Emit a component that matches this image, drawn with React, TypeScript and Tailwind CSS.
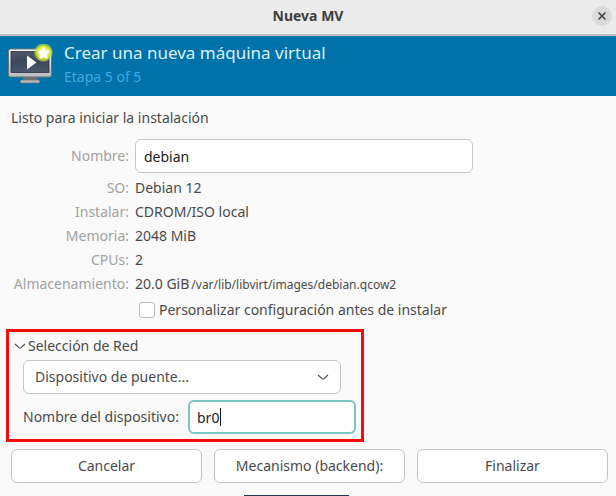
import { useState } from 'react'

const details = [
  { label: 'SO:', value: 'Debian 12' },
  { label: 'Instalar:', value: 'CDROM/ISO local' },
  { label: 'Memoria:', value: '2048 MiB' },
  { label: 'CPUs:', value: '2' },
  { label: 'Almacenamiento:', value: '20.0 GiB', path: '/var/lib/libvirt/images/debian.qcow2' },
]

function Chevron() {
  return (
    <svg viewBox="0 0 12 12" className="w-3 h-3 shrink-0" fill="none" stroke="#4a4a4a" strokeWidth="1.1" aria-hidden="true">
      <path d="M1 4L5 7.600Q6 8.400 7 7.600L11 4" />
    </svg>
  )
}

function MonitorIcon() {
  return (
    <svg viewBox="0 1 46 44" className="w-[46px] h-11 shrink-0" aria-hidden="true">
      <defs>
        <linearGradient id="frame" x1="0" y1="0" x2="0" y2="1">
          <stop offset="0" stopColor="#fafafa" />
          <stop offset="1" stopColor="#b9bbbd" />
        </linearGradient>
        <linearGradient id="screen" x1="0" y1="0" x2="0" y2="1">
          <stop offset="0" stopColor="#4d5868" />
          <stop offset="0.5" stopColor="#3c475a" />
          <stop offset="1" stopColor="#4b596d" />
        </linearGradient>
        <radialGradient id="glow">
          <stop offset="0" stopColor="#fbff90" />
          <stop offset="0.55" stopColor="#e6f23a" />
          <stop offset="0.8" stopColor="#c2dc38" stopOpacity="0.75" />
          <stop offset="1" stopColor="#a0c850" stopOpacity="0" />
        </radialGradient>
      </defs>
      <path d="M16 34h14v4H16z" fill="#6b6f73" />
      <rect x="13.500" y="37" width="19" height="3" rx="1" fill="#b4b4b4" stroke="#777" strokeWidth="0.6" />
      <rect x="1.500" y="6" width="43" height="28" rx="2" fill="url(#frame)" stroke="#6e7376" />
      <rect x="4" y="8.500" width="38" height="21" fill="url(#screen)" stroke="#29313d" strokeWidth="0.8" />
      <path d="M20 12.500L29.500 19.500L20 26.500z" fill="#fff" />
      <circle cx="36.500" cy="9.500" r="10" fill="url(#glow)" />
      <path
        d="M36.500 4L38.400 7.900L42.300 8.500L39.400 11.300L40.100 15.300L36.500 13.400L32.900 15.300L33.600 11.300L30.700 8.500L34.600 7.900z"
        fill="#fff"
        stroke="#fff"
        strokeLinejoin="round"
      />
    </svg>
  )
}

export default function App() {
  const [name, setName] = useState('debian')
  const [customize, setCustomize] = useState(false)
  const [open, setOpen] = useState(true)
  const [device, setDevice] = useState('br0')

  return (
    <div className="bg-[#fafafa] text-[#4a4a4a] text-sm leading-6 font-['Noto_Sans',sans-serif]">
      <header className="flex items-center h-9 px-1 pb-[2px] bg-[#ebebeb] border-b-2 border-[#b9c0c3]">
        <h1 className="flex-1 pl-5 text-center font-bold text-[#3d3d3d]">Nueva MV</h1>
        <button aria-label="Cerrar" className="flex items-center justify-center w-5 h-5 rounded-full bg-[#dadada]">
          <svg viewBox="0 0 8 8" className="w-2 h-2" stroke="#3d3d3d" strokeWidth="1.5" aria-hidden="true">
            <path d="M0.500 0.500L7.500 7.500M7.500 0.500L0.500 7.500" />
          </svg>
        </button>
      </header>

      <div className="flex items-center gap-[11px] h-[60px] px-[7px] bg-[#0072aa]">
        <MonitorIcon />
        <div className="pb-[2px]">
          <h2 className="text-[17px] leading-6 text-[#d9f1f8]">Crear una nueva máquina virtual</h2>
          <p className="text-[#3fabde]">Etapa 5 of 5</p>
        </div>
      </div>

      <main className="pt-[10px]">
        <p className="px-[11px]">Listo para iniciar la instalación</p>

        <div className="grid grid-cols-[118px_1fr] gap-x-[6px] px-[11px] mt-[9px]">
          <label htmlFor="name" className="self-center text-right text-[#a2a2a2]">Nombre:</label>
          <input
            id="name"
            value={name}
            onChange={(e) => setName(e.target.value)}
            className="w-full max-w-[338px] h-[34px] px-2 bg-white border border-[#c4c4c4] rounded-md text-[#222] outline-none"
          />
          <dl className="col-span-2 grid grid-cols-subgrid pt-[3px]">
            {details.map((d) => (
              <div key={d.label} className="col-span-2 grid grid-cols-subgrid">
                <dt className="text-right text-[#a2a2a2]">{d.label}</dt>
                <dd className="whitespace-nowrap">
                  {d.value}
                  {d.path && <span className="ml-[2px] text-xs">{d.path}</span>}
                </dd>
              </div>
            ))}
          </dl>
          <label className="col-start-2 flex items-center gap-1 pl-1 mt-[2px]">
            <input
              type="checkbox"
              checked={customize}
              onChange={(e) => setCustomize(e.target.checked)}
              className="appearance-none w-4 h-4 bg-white border border-[#bdbdbd] rounded-[3px] checked:bg-[#0072aa]"
            />
            Personalizar configuración antes de instalar
          </label>
        </div>

        <section className="w-[358px] max-w-full ml-[6px] mt-[7px] px-[5px] pb-[5px] border-[3px] border-[#f20d0d]">
          <button
            aria-expanded={open}
            onClick={() => setOpen(!open)}
            className="flex items-center gap-[2px] h-7"
          >
            <Chevron />
            Selección de Red
          </button>
          {open && (
            <div className="flex flex-col gap-[6px] pl-[9px]">
              <div className="relative w-[318px] max-w-full">
                <select
                  aria-label="Selección de Red"
                  className="appearance-none w-full h-[34px] px-[11px] bg-white border border-[#c4c4c4] rounded-md"
                >
                  <option>Dispositivo de puente...</option>
                </select>
                <span className="absolute right-3 top-[11px] pointer-events-none">
                  <Chevron />
                </span>
              </div>
              <div className="flex items-center">
                <label htmlFor="device" className="w-[165px] whitespace-nowrap">Nombre del dispositivo:</label>
                <div className="relative flex-1">
                  <input
                    id="device"
                    value={device}
                    onChange={(e) => setDevice(e.target.value)}
                    className="w-full h-[34px] px-[7px] bg-white border-2 border-[#7cc5c0] rounded-md text-[#222] outline-none caret-transparent"
                  />
                  {/* text cursor, sits right after the typed value */}
                  <span className="absolute left-[9px] top-2 flex h-[18px] pr-px border-r border-[#111] pointer-events-none">
                    <span className="invisible" aria-hidden="true">{device}</span>
                  </span>
                </div>
              </div>
            </div>
          )}
        </section>

        <div className="grid grid-cols-3 gap-3 pl-[11px] pr-2 mt-[7px]">
          <button className="h-[34px] bg-white border border-[#c4c4c4] rounded-md">Cancelar</button>
          <button className="h-[34px] bg-white border border-[#c4c4c4] rounded-md">Mecanismo (backend):</button>
          <button className="h-[34px] bg-white border border-[#c4c4c4] rounded-md">Finalizar</button>
        </div>

        <div className="flex justify-center pr-6 mt-3">
          <div className="w-[105px] h-px bg-[#1c3554]" />
        </div>
      </main>
    </div>
  )
}
